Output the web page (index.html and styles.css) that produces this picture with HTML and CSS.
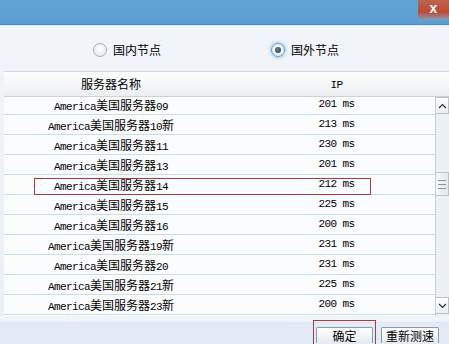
FILE: index.html
```html
<!DOCTYPE html>
<html lang="zh-CN">
<head>
  <meta charset="UTF-8" />
  <meta name="viewport" content="width=device-width, initial-scale=1.0" />
  <title>节点选择</title>
  <link rel="stylesheet" href="styles.css">
</head>
<body>
  <div class="titlebar">
    <div class="close">x</div>
  </div>

  <div class="radios">
    <label class="radio-opt">
      <span class="radio"></span>国内节点
    </label>
    <label class="radio-opt">
      <span class="radio checked"></span>国外节点
    </label>
  </div>

  <div class="table">
    <div class="thead">
      <div class="col-name">服务器名称</div>
      <div class="col-ip"><span class="en">IP</span></div>
    </div>
    <div class="list">
      <div class="rows">
        <div class="rows-inner">
          <div class="row"><div class="col-name"><span class="en">America</span>美国服务器<span class="en">09</span></div><div class="col-ip en">201 ms</div></div>
          <div class="row"><div class="col-name"><span class="en">America</span>美国服务器<span class="en">10</span>新</div><div class="col-ip en">213 ms</div></div>
          <div class="row"><div class="col-name"><span class="en">America</span>美国服务器<span class="en">11</span></div><div class="col-ip en">230 ms</div></div>
          <div class="row"><div class="col-name"><span class="en">America</span>美国服务器<span class="en">13</span></div><div class="col-ip en">201 ms</div></div>
          <div class="row marked"><div class="col-name"><span class="en">America</span>美国服务器<span class="en">14</span></div><div class="col-ip en">212 ms</div></div>
          <div class="row"><div class="col-name"><span class="en">America</span>美国服务器<span class="en">15</span></div><div class="col-ip en">225 ms</div></div>
          <div class="row"><div class="col-name"><span class="en">America</span>美国服务器<span class="en">16</span></div><div class="col-ip en">200 ms</div></div>
          <div class="row"><div class="col-name"><span class="en">America</span>美国服务器<span class="en">19</span>新</div><div class="col-ip en">231 ms</div></div>
          <div class="row"><div class="col-name"><span class="en">America</span>美国服务器<span class="en">20</span></div><div class="col-ip en">231 ms</div></div>
          <div class="row"><div class="col-name"><span class="en">America</span>美国服务器<span class="en">21</span>新</div><div class="col-ip en">225 ms</div></div>
          <div class="row"><div class="col-name"><span class="en">America</span>美国服务器<span class="en">23</span>新</div><div class="col-ip en">200 ms</div></div>
        </div>
      </div>
      <div class="scrollbar">
        <div class="sb-btn">
          <svg width="9" height="6" viewBox="0 0 9 6"><polyline points="1,5 4.5,1.5 8,5" fill="none" stroke="#333" stroke-width="1.2"/></svg>
        </div>
        <div class="sb-track">
          <div class="sb-thumb"><i></i><i></i><i></i></div>
        </div>
        <div class="sb-btn down">
          <svg width="9" height="6" viewBox="0 0 9 6"><polyline points="1,1 4.5,4.5 8,1" fill="none" stroke="#333" stroke-width="1.2"/></svg>
        </div>
      </div>
    </div>
  </div>

  <div class="footer">
    <div class="confirm-wrap"><button class="btn">确定</button></div>
    <button class="btn retest">重新测速</button>
  </div>
</body>
</html>
```

FILE: styles.css
```css
body {
  margin: 0;
  width: 449px;
  height: 344px;
  overflow: hidden;
  font-family: "Noto Sans CJK SC", sans-serif;
  font-size: 12px;
  color: #000;
  background: linear-gradient(#f2f5f9, #e9eff6);
}
.en {
  font-family: "Liberation Mono", monospace;
  font-size: 11px;
  letter-spacing: -0.6px;
}
.titlebar {
  height: 24px;
  background: linear-gradient(#5ea5d6, #5a9fd0);
  border-bottom: 1px solid #4a8cc0;
  display: flex;
  justify-content: flex-end;
  box-shadow: 0 1px 0 #dfe9f3;
}
.close {
  width: 31px;
  height: 20px;
  background: linear-gradient(#b9664e, #c04a30 60%, #7fa0c0);
  color: #fff;
  font: bold 14px/16px "Liberation Sans", sans-serif;
  text-align: center;
}
.radios {
  height: 46px;
  display: flex;
  align-items: center;
  padding-left: 93px;
  padding-top: 4px;
  box-sizing: border-box;
}
.radio-opt {
  width: 183px;
  display: flex;
  align-items: center;
  gap: 6px;
  line-height: 14px;
}
.radio {
  width: 12px;
  height: 12px;
  border: 1px solid #a7afb8;
  border-radius: 50%;
  background: radial-gradient(circle at 50% 40%, #ffffff, #dfe3e8);
  display: flex;
  align-items: center;
  justify-content: center;
}
.radio.checked {
  border-color: #5d9fd3;
  box-shadow: 0 0 3px 1px #9ad0f2;
}
.radio.checked::after {
  content: "";
  width: 6px;
  height: 6px;
  border-radius: 50%;
  background: radial-gradient(circle at 40% 40%, #6a7c8e, #26394c);
}
.table {
  margin-left: 4px;
}
.thead {
  height: 24px;
  display: flex;
  align-items: center;
  line-height: 16px;
  border-top: 1px solid #d2d9e0;
  border-bottom: 1px solid #c9d1d9;
  background: linear-gradient(#fcfdfd, #eceff2);
}
.col-name {
  width: 214px;
  text-align: center;
}
.thead .col-ip {
  flex: 1;
  text-align: center;
  padding-left: 6px;
}
.list {
  height: 219px;
  display: flex;
}
.rows {
  flex: 1;
  overflow: hidden;
  position: relative;
  background: #fbfcfd;
}
.rows-inner {
  margin-top: -2px;
}
.row {
  height: 19px;
  line-height: 19px;
  display: flex;
  border-bottom: 1px solid #c6dfe2;
  position: relative;
}
.row .col-ip {
  flex: 1;
  text-align: center;
  padding-left: 20px;
}
.row.marked::after {
  content: "";
  position: absolute;
  left: 30px;
  width: 335px;
  top: 3px;
  bottom: -1px;
  border: 1px solid #a83c3c;
}
.scrollbar {
  width: 13px;
  border-left: 1px solid #c5ced7;
  background: #edf1f5;
  display: flex;
  flex-direction: column;
}
.sb-btn {
  height: 15px;
  border: 1px solid #b9c3cc;
  border-left: none;
  background: linear-gradient(#ffffff, #e9edf1);
  display: flex;
  align-items: center;
  justify-content: center;
}
.sb-btn.down {
  margin-bottom: 2px;
}
.sb-track {
  flex: 1;
}
.sb-thumb {
  margin-top: 58px;
  height: 22px;
  border: 1px solid #b9c3cc;
  border-left: none;
  background: linear-gradient(90deg, #f6f8fa, #e3e8ed);
  display: flex;
  flex-direction: column;
  justify-content: center;
  align-items: center;
  gap: 3px;
}
.sb-thumb i {
  display: block;
  width: 8px;
  height: 1px;
  background: #8a949e;
}
.footer {
  height: 28px;
  display: flex;
  justify-content: flex-end;
  align-items: flex-start;
  gap: 5px;
  padding: 4px 10px 0 0;
  box-sizing: border-box;
  background: linear-gradient(#f1f5f9 0, #f1f5f9 6px, #d9e2ec 6px, #e3ecf6 7px);
}
.confirm-wrap {
  border: 1px solid #b03a3a;
  border-bottom: none;
  padding: 6px 2px 0;
}
.btn {
  width: 57px;
  height: 16px;
  padding: 1px 0 0;
  border: 1px solid #8b9aa8;
  border-bottom: none;
  border-radius: 2px 2px 0 0;
  background: linear-gradient(#ffffff, #e6ebf0);
  font-family: "Noto Sans CJK SC", sans-serif;
  font-size: 12px;
  color: #000;
  line-height: 14px;
  box-sizing: border-box;
}
.btn.retest {
  width: 58px;
  margin-top: 7px;
}
```
